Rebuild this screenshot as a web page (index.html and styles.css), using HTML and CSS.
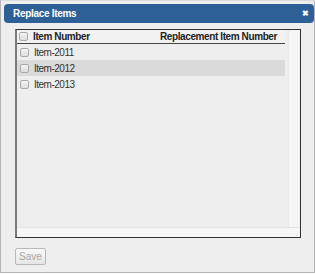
FILE: index.html
```html
<!DOCTYPE html>
<html lang="en">
<head>
    <meta charset="UTF-8">
    <title>Replace Items</title>
    <link rel="stylesheet" href="styles.css">
</head>
<body>
<div class="dialog">
    <div class="titlebar">
        <span class="title">Replace Items</span>
        <span class="close">&#x2716;</span>
    </div>
    <div class="grid">
        <div class="grid-main">
            <div class="grid-body">
                <div class="head">
                    <span class="cb"></span>
                    <span class="col-item">Item Number</span>
                    <span class="col-repl">Replacement Item Number</span>
                </div>
                <div class="row"><span class="cb"></span><span class="col-item">Item-2011</span></div>
                <div class="row selected"><span class="cb"></span><span class="col-item">Item-2012</span></div>
                <div class="row"><span class="cb"></span><span class="col-item">Item-2013</span></div>
            </div>
            <div class="vscroll"></div>
        </div>
        <div class="hscroll"></div>
    </div>
    <div class="footer">
        <button class="btn" disabled>Save</button>
    </div>
</div>
</body>
</html>
```

FILE: styles.css
```css
body{
    margin: 0;
    font-family: "Liberation Sans", Arial, sans-serif;
}
.dialog{
    width: 315px;
    height: 273px;
    box-sizing: border-box;
    background: #eeeeee;
    border: 1px solid #b4b4b4;
    border-top-color: #dcdcdc;
    padding: 3px 0 0 3px;
}
.titlebar{
    height: 19px;
    background: #2e6098;
    border-radius: 4px;
    display: flex;
    align-items: center;
    justify-content: space-between;
    padding: 0 5px 0 9px;
    color: #fff;
}
.title{
    font-size: 10px;
    font-weight: bold;
    letter-spacing: -0.3px;
}
.close{
    font-size: 8px;
    font-weight: bold;
}
.grid{
    margin: 6px 0 0 11px;
    width: 286px;
    height: 209px;
    box-sizing: border-box;
    border: 1px solid #333;
    border-left: 2px solid #7a7a7a;
    display: flex;
    flex-direction: column;
}
.grid-main{
    flex: 1;
    display: flex;
    gap: 3px;
}
.grid-body{
    flex: 1;
    background: #eeeeee;
}
.vscroll{
    width: 10px;
    margin-right: 1px;
    background: #f5f5f5;
    border-left: 1px solid #e8e8e8;
}
.hscroll{
    height: 9px;
    background: #f6f6f6;
    border-top: 1px solid #e4e4e4;
}
.head{
    height: 13px;
    display: flex;
    align-items: center;
    border-bottom: 1px solid #444;
    background: #f2f2f2;
    font-size: 10px;
    font-weight: bold;
    letter-spacing: -0.4px;
    color: #222;
}
.row{
    height: 16px;
    display: flex;
    align-items: center;
    font-size: 10px;
    letter-spacing: -0.5px;
    color: #333;
}
.row.selected{
    background: #dadada;
}
.cb{
    width: 7px;
    height: 7px;
    margin: 0 5px 0 2px;
    border: 1px solid #aaa;
    border-radius: 2px;
    background: linear-gradient(#f4f4f4, #dcdcdc);
    flex: none;
}
.row .cb{
    margin: 0 5px 0 3px;
}
.col-repl{
    margin-left: auto;
    margin-right: 8px;
}
.footer{
    padding: 8px 0 0 11px;
}
.btn{
    width: 31px;
    height: 17px;
    padding: 0;
    font-family: "Liberation Sans", Arial, sans-serif;
    font-size: 10px;
    color: #a8a8a8;
    background: linear-gradient(#f8f8f8, #e6e6e6);
    border: 1px solid #b8b8b8;
    border-radius: 2px;
}
```
